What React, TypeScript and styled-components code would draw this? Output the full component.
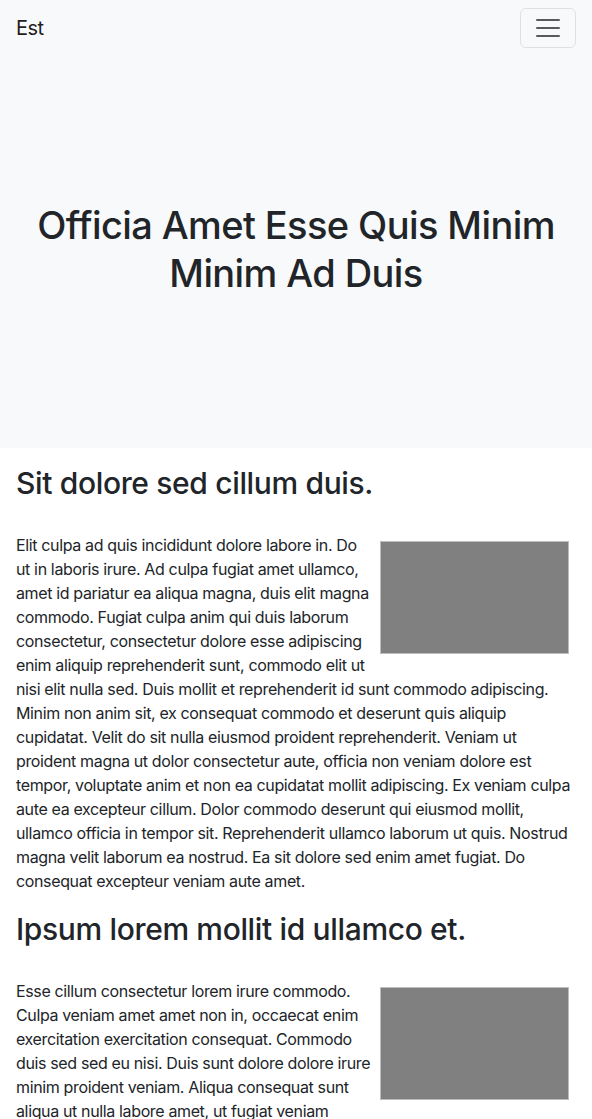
import React from "react";
import styled, { createGlobalStyle } from "styled-components";

const Global = createGlobalStyle`
  html, body { margin: 0; padding: 0; }
  body {
    font-family: Inter, "Noto Sans", sans-serif;
    font-size: 16px;
    line-height: 1.5;
    letter-spacing: -0.36px;
    color: #212529;
    background: #fff;
  }
  * { box-sizing: border-box; }
`;

const Navbar = styled.nav`
  height: 56px;
  background: #f8f9fa;
  display: flex;
  align-items: center;
  justify-content: space-between;
  padding: 0 16px;
`;

const Brand = styled.a`
  font-size: 20px;
  line-height: 30px;
  letter-spacing: -0.5px;
  color: rgba(0, 0, 0, 0.9);
  text-decoration: none;
`;

const Toggler = styled.button`
  width: 56px;
  height: 40px;
  padding: 4px 12px;
  border: 1px solid rgba(0, 0, 0, 0.1);
  border-radius: 6px;
  background: transparent;
  display: flex;
  align-items: center;
  justify-content: center;
`;

const Hero = styled.header`
  height: 392px;
  background: #f8f9fa;
  display: flex;
  align-items: center;
  justify-content: center;
  padding: 0 16px 6px;
`;

const HeroTitle = styled.h1`
  margin: 0;
  font-size: 38px;
  font-weight: 500;
  line-height: 48px;
  letter-spacing: -0.6px;
  text-align: center;
`;

const Container = styled.main`
  padding: 16px 16px 0;
`;

const Section = styled.section``;

const Heading = styled.h2`
  margin: 0 0 31px;
  font-size: 30px;
  font-weight: 500;
  line-height: 38px;
  letter-spacing: -0.35px;
`;

const Paragraph = styled.p`
  margin: 0 0 17px;
`;

const Placeholder = styled.div`
  float: right;
  width: 189px;
  height: 113px;
  margin: 8px 7px 8px 8px;
  background: #808080;
  border: 1px solid #bdbdbd;
`;

const sections = [
  {
    title: "Sit dolore sed cillum duis.",
    text: "Elit culpa ad quis incididunt dolore labore in. Do ut in laboris irure. Ad culpa fugiat amet ullamco, amet id pariatur ea aliqua magna, duis elit magna commodo. Fugiat culpa anim qui duis laborum consectetur, consectetur dolore esse adipiscing enim aliquip reprehenderit sunt, commodo elit ut nisi elit nulla sed. Duis mollit et reprehenderit id sunt commodo adipiscing. Minim non anim sit, ex consequat commodo et deserunt quis aliquip cupidatat. Velit do sit nulla eiusmod proident reprehenderit. Veniam ut proident magna ut dolor consectetur aute, officia non veniam dolore est tempor, voluptate anim et non ea cupidatat mollit adipiscing. Ex veniam culpa aute ea excepteur cillum. Dolor commodo deserunt qui eiusmod mollit, ullamco officia in tempor sit. Reprehenderit ullamco laborum ut quis. Nostrud magna velit laborum ea nostrud. Ea sit dolore sed enim amet fugiat. Do consequat excepteur veniam aute amet.",
  },
  {
    title: "Ipsum lorem mollit id ullamco et.",
    text: "Esse cillum consectetur lorem irure commodo. Culpa veniam amet amet non in, occaecat enim exercitation exercitation consequat. Commodo duis sed sed eu nisi. Duis sunt dolore dolore irure minim proident veniam. Aliqua consequat sunt aliqua ut nulla labore amet, ut fugiat veniam incididunt elit. Lorem sed cillum fugiat aliqua, ad magna nostrud proident. Quis ea dolor sunt duis, non amet velit laborum elit.",
  },
];

export default function App() {
  return (
    <>
      <Global />
      <Navbar>
        <Brand href="#">Est</Brand>
        <Toggler aria-label="Toggle navigation">
          <svg width="30" height="30" viewBox="0 0 30 30">
            <path
              d="M4 7h22M4 15h22M4 23h22"
              stroke="rgba(33,37,41,0.75)"
              strokeWidth="2"
              strokeLinecap="round"
              strokeMiterlimit="10"
            />
          </svg>
        </Toggler>
      </Navbar>
      <Hero>
        <HeroTitle>Officia Amet Esse Quis Minim Minim Ad Duis</HeroTitle>
      </Hero>
      <Container>
        {sections.map((s) => (
          <Section key={s.title}>
            <Heading>{s.title}</Heading>
            <Paragraph>
              <Placeholder />
              {s.text}
            </Paragraph>
          </Section>
        ))}
      </Container>
    </>
  );
}
